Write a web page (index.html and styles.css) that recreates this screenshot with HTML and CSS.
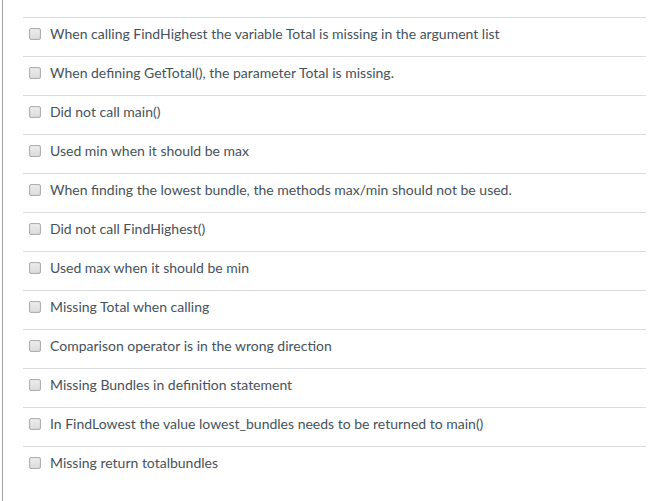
FILE: index.html
```
<!DOCTYPE html>
<html lang="en">
<head>
  <meta charset="UTF-8" />
  <meta name="viewport" content="width=device-width, initial-scale=1" />
  <title>Quiz</title>
  <link rel="stylesheet" href="styles.css">
</head>
<body>

  <form class="question">
    <div class="answer">
      <label><input type="checkbox" name="answers" value="1"> When calling FindHighest the variable Total is missing in the argument list</label>
    </div>
    <div class="answer">
      <label><input type="checkbox" name="answers" value="2"> When defining GetTotal(), the parameter Total is missing.</label>
    </div>
    <div class="answer">
      <label><input type="checkbox" name="answers" value="3"> Did not call main()</label>
    </div>
    <div class="answer">
      <label><input type="checkbox" name="answers" value="4"> Used min when it should be max</label>
    </div>
    <div class="answer">
      <label><input type="checkbox" name="answers" value="5"> When finding the lowest bundle, the methods max/min should not be used.</label>
    </div>
    <div class="answer">
      <label><input type="checkbox" name="answers" value="6"> Did not call FindHighest()</label>
    </div>
    <div class="answer">
      <label><input type="checkbox" name="answers" value="7"> Used max when it should be min</label>
    </div>
    <div class="answer">
      <label><input type="checkbox" name="answers" value="8"> Missing Total when calling</label>
    </div>
    <div class="answer">
      <label><input type="checkbox" name="answers" value="9"> Comparison operator is in the wrong direction</label>
    </div>
    <div class="answer">
      <label><input type="checkbox" name="answers" value="10"> Missing Bundles in definition statement</label>
    </div>
    <div class="answer">
      <label><input type="checkbox" name="answers" value="11"> In FindLowest the value lowest_bundles needs to be returned to main()</label>
    </div>
    <div class="answer">
      <label><input type="checkbox" name="answers" value="12"> Missing return totalbundles</label>
    </div>
  </form>

</body>
</html>
```
FILE: styles.css
```
body {
  margin: 0;
  font-family: Lato, "Liberation Sans", sans-serif;
  font-size: 14px;
  line-height: 20px;
  color: #46525b;
  background-color: white;
}

.question {
  box-sizing: border-box;
  min-height: 100vh;
  margin-left: 2px;
  padding: 17px 20px 0 20px;
  border-left: 1px solid #a0a0a0;
}

.answer {
  padding: 6px 6px 12px 6px;
  border-top: 1px solid #d9dbdd;
}

.answer label {
  display: flex;
  align-items: center;
  gap: 9px;
}

.answer input {
  appearance: none;
  flex: none;
  width: 12px;
  height: 12px;
  margin: 0;
  border: 1px solid #b0b0b0;
  border-radius: 2px;
  background: linear-gradient(#ececec, #dcdcdc);
  box-shadow: inset 0 0 1px rgba(0,0,0,0.2);
}

.answer input:checked {
  background: #0374b5;
}
```
